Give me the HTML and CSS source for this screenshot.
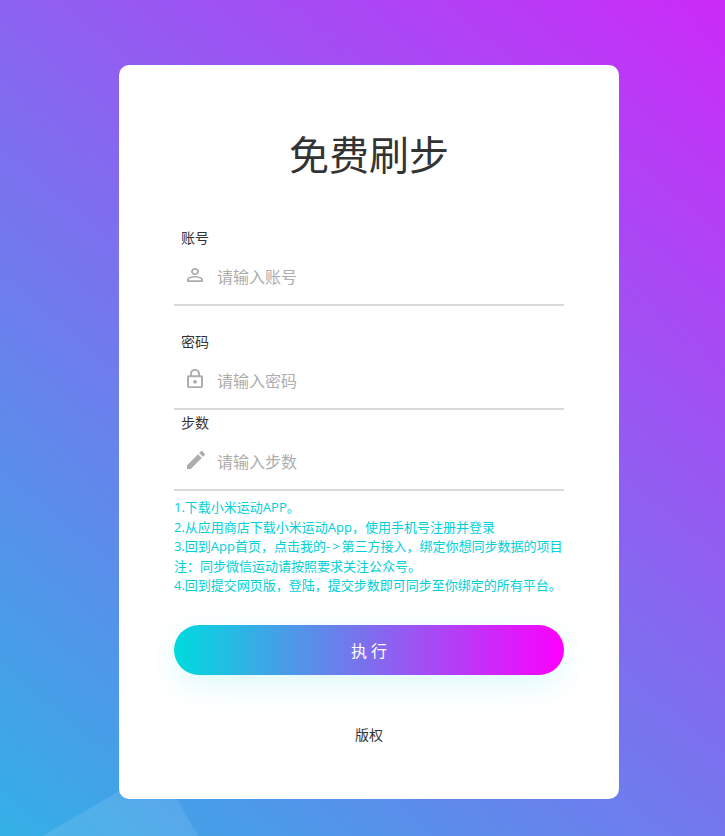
FILE: index.html
```html
<!DOCTYPE html>
<html lang="zh-CN">

<head>
    <meta charset="utf-8">
    <title>免费刷步</title>
    <link rel="stylesheet" href="styles.css">
</head>

<body>
    <svg class="decor" width="725" height="836" viewBox="0 0 725 836">
        <polygon points="42,836 159,768 198,836" />
    </svg>

    <div class="card">
        <h1 class="title">免费刷步</h1>

        <div class="field">
            <label class="label" for="user">账号</label>
            <div class="row">
                <span class="icon">
                    <svg width="16" height="14" viewBox="4 4 16 16" preserveAspectRatio="none">
                        <path d="M12 5.9c1.16 0 2.1.94 2.1 2.1s-.94 2.1-2.1 2.1S9.9 9.16 9.9 8s.94-2.1 2.1-2.1m0 9c2.97 0 6.1 1.46 6.1 2.1v1.1H5.9V17c0-.64 3.13-2.1 6.1-2.1M12 4C9.79 4 8 5.79 8 8s1.79 4 4 4 4-1.79 4-4-1.79-4-4-4zm0 9c-2.67 0-8 1.34-8 4v3h16v-3c0-2.66-5.33-4-8-4z" />
                    </svg>
                </span>
                <input class="input" id="user" type="text" placeholder="请输入账号">
            </div>
        </div>

        <div class="field field-pass">
            <label class="label" for="pass">密码</label>
            <div class="row">
                <span class="icon">
                    <svg width="16" height="20" viewBox="4 1 16 22" preserveAspectRatio="none">
                        <path d="M18 8h-1V6c0-2.76-2.24-5-5-5S7 3.24 7 6v2H6c-1.1 0-2 .9-2 2v10c0 1.1.9 2 2 2h12c1.1 0 2-.9 2-2V10c0-1.1-.9-2-2-2zM8.9 6c0-1.71 1.39-3.1 3.1-3.1s3.1 1.39 3.1 3.1v2H8.9V6zM18 20H6V10h12v10zm-6-3c1.1 0 2-.9 2-2s-.9-2-2-2-2 .9-2 2 .9 2 2 2z" />
                    </svg>
                </span>
                <input class="input" id="pass" type="text" placeholder="请输入密码">
            </div>
        </div>

        <div class="field field-step">
            <label class="label" for="step">步数</label>
            <div class="row">
                <span class="icon">
                    <svg width="18" height="18" viewBox="3 3 18 18">
                        <path d="M3 17.25V21h3.75L17.81 9.94l-3.75-3.75L3 17.25zM20.71 7.04c.39-.39.39-1.02 0-1.41l-2.34-2.34c-.39-.39-1.02-.39-1.41 0l-1.83 1.83 3.75 3.75 1.83-1.83z" />
                    </svg>
                </span>
                <input class="input" id="step" type="text" placeholder="请输入步数">
            </div>
        </div>

        <div class="notes">
            <div>1.下载小米运动APP。</div>
            <div>2.从应用商店下载小米运动App，使用手机号注册并登录</div>
            <div>3.回到App首页，点击我的<span class="arrow">-&gt;</span>第三方接入，绑定你想同步数据的项目</div>
            <div>注：同步微信运动请按照要求关注公众号。</div>
            <div>4.回到提交网页版，登陆，提交步数即可同步至你绑定的所有平台。</div>
        </div>

        <button class="submit">执 行</button>

        <div class="footer">版权</div>
    </div>
</body>

</html>
```

FILE: styles.css
```css
* {
    box-sizing: border-box;
}

html, body {
    margin: 0;
    height: 836px;
    overflow: hidden;
}

body {
    padding: 65px 0 0 119px;
    background: linear-gradient(40deg, #33b0e6 0%, #cc2af8 100%);
    font-family: "Open Sans", "Noto Sans CJK SC", sans-serif;
}

.decor {
    position: absolute;
    left: 0;
    top: 0;
    fill: rgba(255, 255, 255, 0.1);
}

.card {
    position: relative;
    width: 500px;
    height: 734px;
    padding: 60px 55px 0;
    background: #fff;
    border-radius: 10px;
}

.title {
    margin: 0 0 42px;
    height: 60px;
    line-height: 60px;
    font-size: 40px;
    font-weight: 400;
    text-align: center;
    color: #333;
}

.field {
    border-bottom: 2px solid #d9d9d9;
}

.field-pass {
    margin-top: 25px;
}

.field-step {
    margin-top: 2px;
}

.label {
    display: block;
    height: 22px;
    padding-left: 7px;
    line-height: 22px;
    font-size: 14px;
    color: #333;
}

.row {
    display: flex;
    align-items: center;
    height: 55px;
    padding-top: 1px;
}

.icon {
    display: flex;
    flex: none;
    justify-content: flex-start;
    width: 43px;
    margin-bottom: 4px;
    padding-left: 13px;
    fill: #adadad;
}

.input {
    flex: 1;
    min-width: 0;
    padding: 0;
    border: 0;
    outline: 0;
    background: transparent;
    font-family: inherit;
    font-size: 16px;
    color: #333;
}

.input::placeholder {
    color: #adadad;
    opacity: 1;
}

.notes {
    margin-top: 7px;
    font-size: 13px;
    line-height: 19.5px;
    color: #00d0d8;
    white-space: nowrap;
}

.arrow {
    letter-spacing: 2px;
}

.submit {
    display: block;
    width: 390px;
    height: 50px;
    margin-top: 29px;
    border: 0;
    border-radius: 25px;
    background: linear-gradient(to right, #00dbde, #fc00ff);
    box-shadow: 0 10px 30px 0 rgba(0, 219, 222, 0.13);
    font-family: inherit;
    font-size: 16px;
    color: #fff;
}

.footer {
    margin-top: 49px;
    height: 22px;
    line-height: 22px;
    font-size: 14px;
    text-align: center;
    color: #333;
}
```
